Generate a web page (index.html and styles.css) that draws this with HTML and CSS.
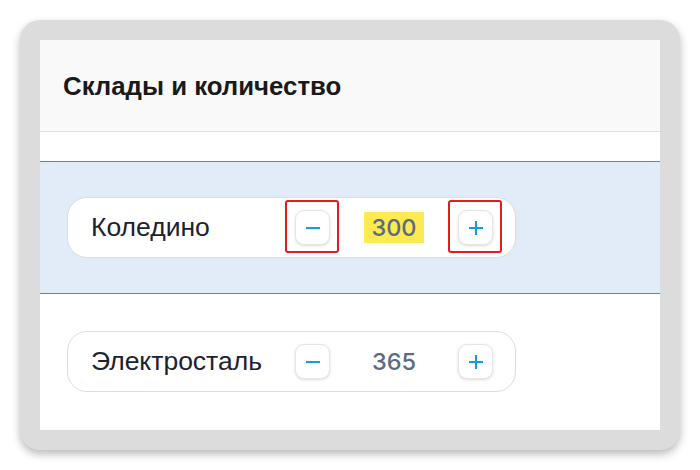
FILE: index.html
```html
<!DOCTYPE html>
<html lang="ru">
<head>
<meta charset="utf-8">
<title>Склады и количество</title>
<link rel="stylesheet" href="styles.css">
</head>
<body>
<div class="frame">
  <div class="panel">
    <div class="header"><h2 class="title">Склады и количество</h2></div>
    <div class="spacer"></div>
    <div class="section active">
      <div class="card">
        <span class="label">Коледино</span>
        <button class="btn marked" aria-label="minus"><svg width="16" height="16" viewBox="0 0 16 16"><path d="M1 8h14" stroke="#0ba0e3" stroke-width="2"/></svg></button>
        <span class="num"><span class="hl">300</span></span>
        <button class="btn marked" aria-label="plus"><svg width="16" height="16" viewBox="0 0 16 16"><path d="M1 8h14M8 1v14" stroke="#0ba0e3" stroke-width="2"/></svg></button>
      </div>
    </div>
    <div class="section second">
      <div class="card">
        <span class="label">Электросталь</span>
        <button class="btn" aria-label="minus"><svg width="16" height="16" viewBox="0 0 16 16"><path d="M1 8h14" stroke="#0ba0e3" stroke-width="2"/></svg></button>
        <span class="num">365</span>
        <button class="btn" aria-label="plus"><svg width="16" height="16" viewBox="0 0 16 16"><path d="M1 8h14M8 1v14" stroke="#0ba0e3" stroke-width="2"/></svg></button>
      </div>
    </div>
  </div>
</div>
</body>
</html>
```
FILE: styles.css
```css
html, body { margin: 0; padding: 0; background: #ffffff; }
body { padding: 20px; font-family: "Liberation Sans", Arial, sans-serif; }
.frame {
  width: 620px;
  height: 390px;
  padding: 20px;
  background: #dcdcdc;
  border-radius: 20px;
  box-shadow: 0 4px 8px rgba(0,0,0,0.28);
}
.panel { width: 620px; height: 390px; background: #ffffff; overflow: hidden; }
.header {
  height: 91px;
  background: #f9f9f9;
  border-bottom: 1px solid #dddddd;
  display: flex;
  align-items: center;
  padding-left: 23px;
}
.title {
  margin: 0;
  font-family: "Liberation Sans", Arial, sans-serif;
  font-weight: bold;
  font-size: 25.8px;
  color: #1a1a1a;
  padding-top: 2px;
}
.spacer { height: 29px; }
.section {
  padding: 35px 27px;
  background: #ffffff;
}
.section.second { padding-top: 37px; }
.section.active {
  background: #e1ecf8;
  border-top: 1px solid #2f95e2;
  border-bottom: 1px solid #2f95e2;
}
.card {
  width: 402px;
  height: 59px;
  padding: 0 22px 0 23px;
  background: #ffffff;
  border: 1px solid #dddddd;
  border-radius: 20px;
  display: grid;
  grid-template-columns: 204px 35px 128px 35px;
  align-items: center;
}
.label { font-size: 26.5px; color: #1c2230; }
.btn {
  position: relative;
  width: 35px;
  height: 35px;
  padding: 0;
  border: 1px solid #e6e6e6;
  border-radius: 9px;
  background: #ffffff;
  box-shadow: 0 1px 3px rgba(0,0,0,0.15);
  display: flex;
  align-items: center;
  justify-content: center;
}
.btn.marked::after {
  content: "";
  position: absolute;
  left: -11px; top: -11px; right: -10px; bottom: -9px;
  border: 2px solid #e11d1d;
  border-radius: 3px;
}
.num {
  text-align: center;
  font-family: Inter, "Liberation Sans", sans-serif;
  font-weight: 500;
  font-size: 23.5px;
  color: #5b6b80;
}
.hl { background: #fde951; padding: 1px 7px; }
```
